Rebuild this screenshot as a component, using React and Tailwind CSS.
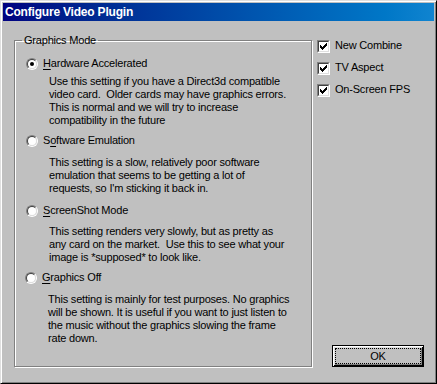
import React, { useState } from 'react';

const modes = [
    {
        id: 'hw',
        key: 'H',
        before: '',
        after: 'ardware Accelerated',
        gapTop: 'mt-[10px]',
        descTop: 'mt-[5px]',
        shift: '',
        desc: [
            'Use this setting if you have a Direct3d compatible',
            'video card.  Older cards may have graphics errors.',
            'This is normal and we will try to increase',
            'compatibility in the future',
        ],
    },
    {
        id: 'sw',
        key: 'o',
        before: 'S',
        after: 'ftware Emulation',
        gapTop: 'mt-[7px]',
        descTop: 'mt-[9px]',
        shift: '',
        desc: [
            'This setting is a slow, relatively poor software',
            'emulation that seems to be getting a lot of',
            "requests, so I'm sticking it back in.",
        ],
    },
    {
        id: 'ss',
        key: 'S',
        before: '',
        after: 'creenShot Mode',
        gapTop: 'mt-[9px]',
        descTop: 'mt-[8px]',
        shift: '',
        desc: [
            'This setting renders very slowly, but as pretty as',
            'any card on the market.  Use this to see what your',
            'image is *supposed* to look like.',
        ],
    },
    {
        id: 'off',
        key: 'G',
        before: '',
        after: 'raphics Off',
        gapTop: 'mt-[7px]',
        descTop: 'mt-[9px]',
        shift: '-ml-[1px]',
        desc: [
            'This setting is mainly for test purposes. No graphics',
            'will be shown. It is useful if you want to just listen to',
            'the music without the graphics slowing the frame',
            'rate down.',
        ],
    },
];

// Sunken Win98 radio button
function Radio({ checked }) {
    return (
        <span className="w-[12px] h-[12px] rounded-full border border-t-[#808080] border-l-[#808080] border-r-white border-b-white flex shrink-0">
            <span className="flex-1 rounded-full border border-t-[#404040] border-l-[#404040] border-r-[#dfdfdf] border-b-[#dfdfdf] bg-white flex items-center justify-center">
                {checked && <span className="w-[4px] h-[4px] rounded-full bg-black" />}
            </span>
        </span>
    );
}

function Check({ checked }) {
    return (
        <span className="w-[13px] h-[13px] border border-t-[#808080] border-l-[#808080] border-r-white border-b-white flex shrink-0">
            <span className="flex-1 border border-t-[#404040] border-l-[#404040] border-r-[#dfdfdf] border-b-[#dfdfdf] bg-white flex items-center justify-center">
                {checked && (
                    <svg width="7" height="7" viewBox="0 0 7 7" shapeRendering="crispEdges">
                        <path d="M0 2h1v3h-1zM1 3h1v3h-1zM2 4h1v3h-1zM3 3h1v3h-1zM4 2h1v3h-1zM5 1h1v3h-1zM6 0h1v3h-1z" fill="#000" />
                    </svg>
                )}
            </span>
        </span>
    );
}

export default function App() {
    const [mode, setMode] = useState('hw');
    const [opts, setOpts] = useState({ combine: true, tv: true, fps: true });

    const toggle = (k) => setOpts((o) => ({ ...o, [k]: !o[k] }));

    return (
        <div className="w-[437px] h-[384px] bg-[#c0c0c0] border border-t-[#dfdfdf] border-l-[#dfdfdf] border-r-black border-b-black shadow-[inset_1px_1px_#fff,inset_-1px_-1px_#808080] p-[2px] flex flex-col text-black font-['Liberation_Sans',Arial,sans-serif] text-[11px] leading-[13px] tracking-[-0.2px] select-none">
            {/* Title bar */}
            <div className="h-[18px] bg-gradient-to-r from-[#000080] to-[#1084d0] flex items-center pl-[2px] shrink-0">
                <span className="text-white font-bold text-[12px] tracking-[-0.2px] leading-[18px]">Configure Video Plugin</span>
            </div>

            <div className="flex pl-[11px] mt-[13px]">
                {/* Graphics Mode group */}
                <fieldset className="w-[298px] h-[333px] border border-[#808080] shadow-[inset_1px_1px_#fff,1px_1px_#fff] pl-[11px]">
                    <legend className="ml-[-4px] px-[2px] leading-[13px]">Graphics Mode</legend>
                    {modes.map((m) => (
                        <div key={m.id} className={`${m.gapTop} ${m.shift}`}>
                            <label className="flex items-center gap-[5px] h-[13px] cursor-default" onClick={() => setMode(m.id)}>
                                <Radio checked={mode === m.id} />
                                <span>
                                    {m.before}
                                    <span className="underline underline-offset-[2px]">{m.key}</span>
                                    {m.after}
                                </span>
                            </label>
                            <div className={`${m.descTop} ml-[23px] whitespace-pre`}>
                                {m.desc.map((line, i) => (
                                    <div key={i}>{line}</div>
                                ))}
                            </div>
                        </div>
                    ))}
                </fieldset>

                {/* Options column */}
                <div className="ml-[5px] w-[107px] flex flex-col justify-between pt-[6px]">
                    <div className="flex flex-col gap-[9px]">
                        {[
                            ['combine', 'New Combine'],
                            ['tv', 'TV Aspect'],
                            ['fps', 'On-Screen FPS'],
                        ].map(([k, label]) => (
                            <label key={k} className="flex items-center gap-[5px] h-[13px] cursor-default" onClick={() => toggle(k)}>
                                <Check checked={opts[k]} />
                                <span className="-mt-[2px]">{label}</span>
                            </label>
                        ))}
                    </div>
                    <button className="self-end w-[92px] h-[22px] border border-black shadow-[inset_1px_1px_#fff,inset_-1px_-1px_#000,inset_2px_2px_#dfdfdf,inset_-2px_-2px_#808080] p-[2px] flex">
                        <span className="flex-1 border border-dotted border-black flex items-center justify-center leading-none">OK</span>
                    </button>
                </div>
            </div>
        </div>
    );
}
